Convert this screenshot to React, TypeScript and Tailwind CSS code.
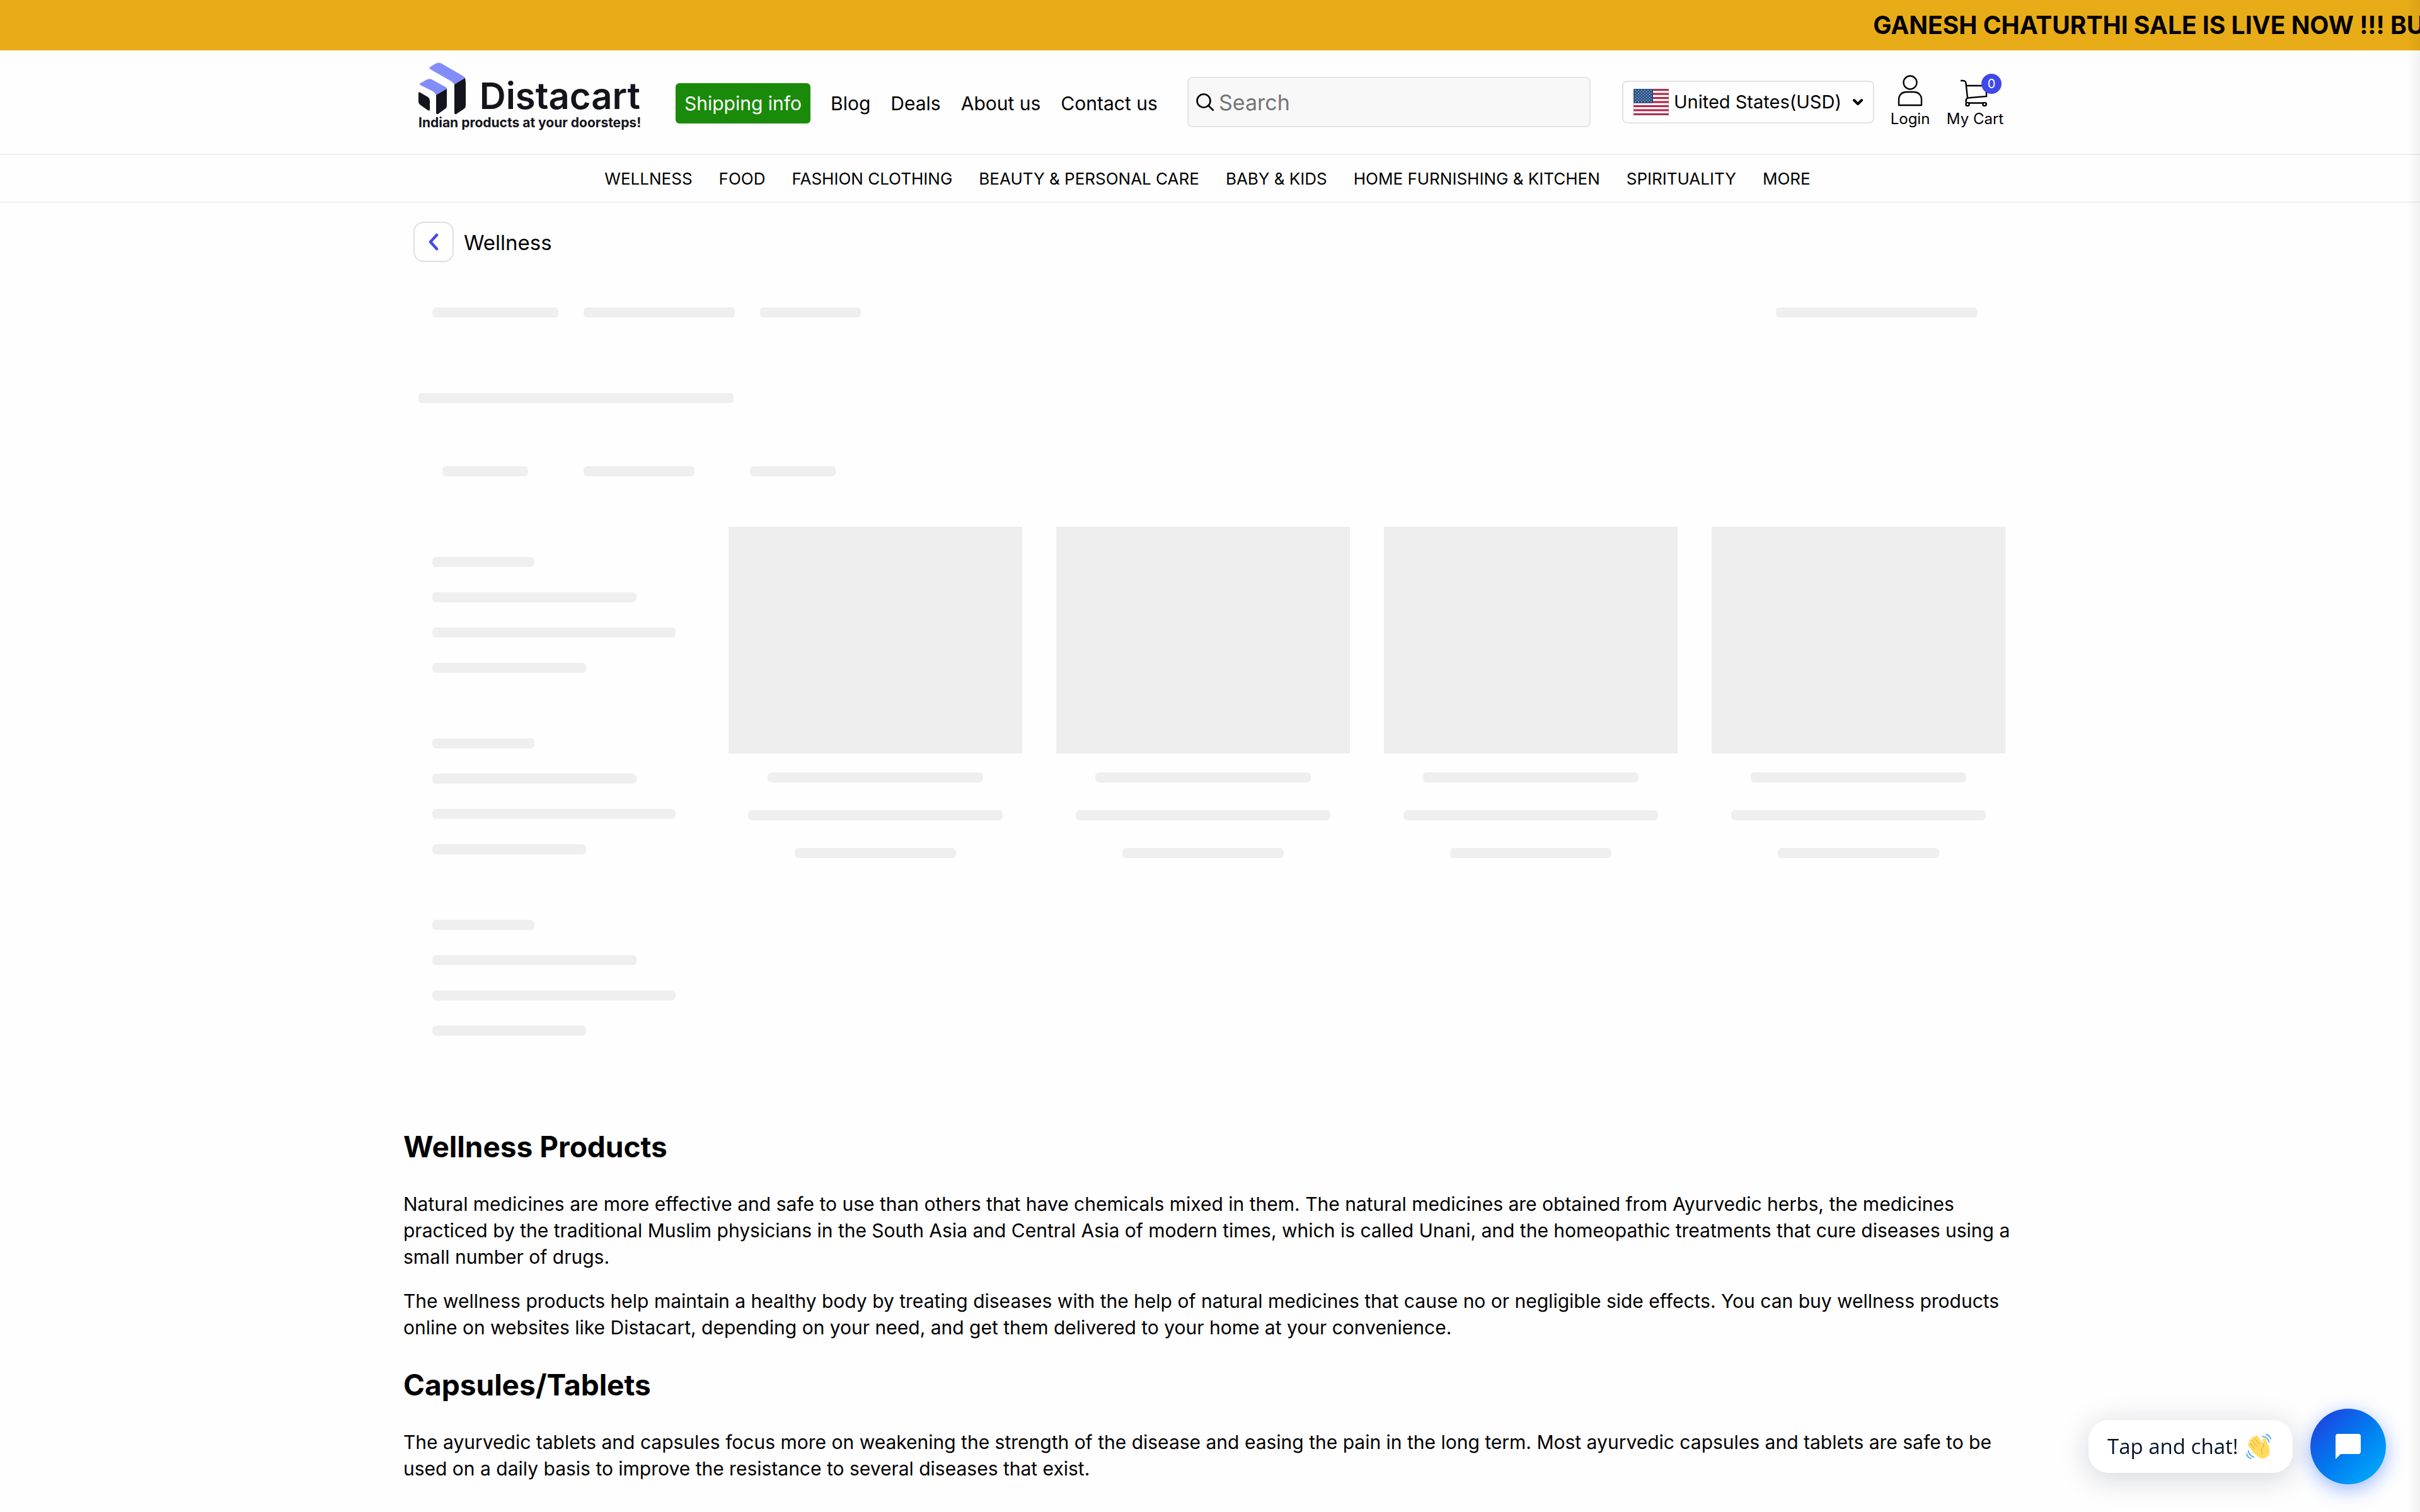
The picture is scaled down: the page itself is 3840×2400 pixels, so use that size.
import type { ReactNode } from "react";

const bar = "h-4 rounded-md bg-[#efefef]";

const navItems = [
  "WELLNESS",
  "FOOD",
  "FASHION CLOTHING",
  "BEAUTY & PERSONAL CARE",
  "BABY & KIDS",
  "HOME FURNISHING & KITCHEN",
  "SPIRITUALITY",
  "MORE",
];

function LogoMark() {
  return (
    <svg viewBox="0 0 76 84" className="h-[84px] w-[76px]" aria-hidden="true">
      <g fill="#14141c">
        <path d="M0 49Q0 46 3 48L15 55Q18 57 18 60V75Q18 78 15 76L5 69Q0 66 0 62Z" />
        <path d="M28 51L45 41V69Q45 72 42 74L31 82Q28 83 28 80Z" />
        <path d="M57 35L73 23Q75 27 75 32V69Q75 72 72 74L60 82Q57 83 57 80Z" />
      </g>
      <g fill="#838dfa">
        <path d="M27 2Q32 -1 37 2L68 20Q72 22 74 25L57 35Q55 32 52 30L19 11Q16 9 19 7Z" />
        <path d="M12 28Q17 25 21 27L41 38Q45 40 45 42L28 52Q26 48 23 46L3 36Q1 35 3 33Z" />
      </g>
    </svg>
  );
}

function Flag() {
  return (
    <svg viewBox="0 0 56 42" className="h-[42px] w-14 shrink-0" aria-hidden="true">
      <rect width="56" height="42" fill="#fff" />
      {[0, 2, 4, 6, 8, 10, 12].map((i) => (
        <rect key={i} y={(i * 42) / 13} width="56" height={42 / 13} fill="#b5294a" />
      ))}
      <rect width="31" height="22.6" fill="#1f4a80" />
      {[0, 1, 2, 3, 4, 5, 6, 7, 8].map((r) =>
        [0, 1, 2, 3, 4, 5].map((c) =>
          r % 2 === 1 && c === 5 ? null : (
            <circle key={`${r}-${c}`} cx={3 + c * 5 + (r % 2) * 2.5} cy={2.3 + r * 2.25} r="0.9" fill="#c9d6ea" />
          ),
        ),
      )}
      <rect x="0.5" y="0.5" width="55" height="41" fill="none" stroke="#6b6b8a" strokeOpacity="0.4" />
    </svg>
  );
}

function Wave() {
  return (
    <svg viewBox="0 0 40 40" className="size-10 shrink-0" role="img" aria-label="waving hand">
      <g stroke="#FFDC5D" strokeWidth="5" strokeLinecap="round" fill="none">
        <path d="M5.500 17L14 29M7.500 11L20 28M11.500 7L24 25M16.500 5L28 22" />
        <path d="M29 9.500Q31 16 33.500 20" />
      </g>
      <path d="M11 26L27 15L34 17Q42 32 31 38Q20 43 11 26Z" fill="#FFDC5D" />
      <g stroke="#EF9645" strokeWidth="1" strokeLinecap="round" fill="none">
        <path d="M6.500 14.500L13 23.500M9 9L17 20M14 6.500L21 16.500M26 32Q22 24 28 20Q29 18 26.500 14" />
      </g>
      <g stroke="#5DADEC" strokeWidth="2" strokeLinecap="round" fill="none">
        <path d="M26.500 4Q34 5 36.500 13M32 1Q38 2.500 39 8M3.500 27Q5 34 12 37M1 32Q2.500 38 7.500 39" />
      </g>
    </svg>
  );
}

function SkeletonGroup() {
  return (
    <div className="flex flex-col gap-10">
      <div className={`${bar} w-[162px]`} />
      <div className={`${bar} w-[324px]`} />
      <div className={`${bar} w-[386px]`} />
      <div className={`${bar} w-[244px]`} />
    </div>
  );
}

function SkeletonCard() {
  return (
    <div className="flex flex-col items-center">
      <div className="h-[360px] w-full bg-[#eeeeee]" />
      <div className="mt-[30px] flex w-full flex-col items-center gap-11">
        <div className={`${bar} w-[342px]`} />
        <div className={`${bar} w-[404px]`} />
        <div className={`${bar} w-64`} />
      </div>
    </div>
  );
}

function Heading({ children }: { children: ReactNode }) {
  return <h2 className="text-[46px] leading-[68px] font-bold">{children}</h2>;
}

function Paragraph({ children }: { children: ReactNode }) {
  return <p className="text-[30px] leading-[42px]">{children}</p>;
}

export default function App() {
  return (
    <div className="relative h-screen overflow-hidden bg-[#fefefe] font-['Inter',sans-serif] text-black">
      <div className="flex h-20 items-center overflow-hidden bg-[#e8ac18] pl-[77.4%] text-[39px] font-bold whitespace-nowrap">
        GANESH CHATURTHI SALE IS LIVE NOW !!! BUY
      </div>

      <header>
        <div className="border-b-2 border-[#efefef]">
          <div className="mx-auto flex h-[164px] max-w-[2560px] items-center pr-5 pl-6">
            <a href="#" className="flex w-[352px] flex-col pb-[18px]" aria-label="Distacart">
              <span className="flex items-end justify-between">
                <LogoMark />
                <span className="text-[58px] leading-[62px] font-semibold text-[#14141c]">Distacart</span>
              </span>
              <span className="text-[21px] leading-6 font-bold whitespace-nowrap text-[#14141c]">
                Indian products at your doorsteps!
              </span>
            </a>
            <nav className="mt-1 ml-14 flex items-center gap-8 text-[30px] whitespace-nowrap" aria-label="Site">
              <a href="#" className="flex h-16 items-center rounded-md bg-[#1a8a0a] px-[14px] text-white">
                Shipping info
              </a>
              <a href="#">Blog</a>
              <a href="#">Deals</a>
              <a href="#">About us</a>
              <a href="#">Contact us</a>
            </nav>
            <label className="ml-auto flex h-20 w-[640px] items-center gap-2 rounded-lg border-2 border-[#e5e5e5] bg-[#f8f8f8] px-3">
              <svg viewBox="0 0 28 28" className="size-7" fill="none" stroke="#000" strokeWidth="2.6" aria-hidden="true">
                <circle cx="12" cy="12" r="10.5" />
                <path d="M19.500 19.500L27 27" strokeLinecap="round" />
              </svg>
              <input
                type="text"
                aria-label="Search"
                placeholder="Search"
                className="min-w-0 flex-1 bg-transparent text-[34px] outline-none placeholder:text-[#757575]"
              />
            </label>
            <div className="ml-[50px] flex h-[68px] w-[400px] items-center gap-2 rounded-lg border-2 border-[#e3e3e3] px-4">
              <Flag />
              <select aria-label="Country" className="min-w-0 flex-1 appearance-none bg-transparent text-[29px] outline-none">
                <option>United States(USD)</option>
              </select>
              <svg viewBox="0 0 16 12" className="h-3 w-4 shrink-0" fill="none" stroke="#000" strokeWidth="4" strokeLinecap="round" strokeLinejoin="round" aria-hidden="true">
                <path d="M2 3l6 6 6-6" />
              </svg>
            </div>
            <a href="#" className="ml-[26px] flex w-[62px] flex-col items-center gap-1 text-2xl">
              <svg viewBox="0 0 40 50" className="h-[50px] w-10" fill="none" stroke="#000" strokeWidth="2.4" aria-hidden="true">
                <circle cx="20" cy="12" r="10.5" />
                <path d="M2 48V39C2 31 8 27 14 27H26C32 27 38 31 38 39V48Z" strokeLinejoin="round" />
              </svg>
              Login
            </a>
            <a href="#" className="relative ml-[26px] flex w-[92px] flex-col items-center gap-1 text-2xl whitespace-nowrap">
              <svg viewBox="0 0 48 50" className="h-[50px] w-12" fill="none" stroke="#000" strokeWidth="2.4" aria-hidden="true">
                <path d="M1 9h3c4 0 5 1 5.500 4L12 36.500 42 34V15M10 17H42M12 36.500c-4 3-3 8 1 8h26c2 0 3 1 3 2" />
                <circle cx="12" cy="46.5" r="2.6" fill="#fefefe" />
                <circle cx="39" cy="46.5" r="2.6" fill="#fefefe" />
              </svg>
              My Cart
              <span className="absolute -top-[2px] right-1 flex size-8 items-center justify-center rounded-full bg-[#3e49e8] text-xl text-white">
                0
              </span>
            </a>
          </div>
        </div>
        <nav className="flex h-[76px] items-center justify-center gap-[42px] border-b-2 border-[#efefef] pr-2 text-[26px] whitespace-nowrap" aria-label="Categories">
          {navItems.map((item) => (
            <a key={item} href="#">
              {item}
            </a>
          ))}
        </nav>
      </header>

      <main className="mx-auto max-w-[2560px]">
        <div className="flex items-center gap-4 px-4 pt-[30px]">
          <button type="button" aria-label="Back" className="flex size-16 items-center justify-center rounded-2xl border-2 border-[#dfdfdf] bg-white">
            <svg viewBox="0 0 16 28" className="h-7 w-4" fill="none" stroke="#4747e0" strokeWidth="4.5" strokeLinecap="round" strokeLinejoin="round" aria-hidden="true">
              <path d="M13 3L3 14l10 11" />
            </svg>
          </button>
          <h1 className="pt-1 text-[33px]">Wellness</h1>
        </div>

        <div className="mt-[72px] flex gap-10 pr-[62px] pl-[46px]">
          <div className={`${bar} w-[200px]`} />
          <div className={`${bar} w-60`} />
          <div className={`${bar} w-40`} />
          <div className={`${bar} ml-auto w-80`} />
        </div>
        <div className="mt-[120px] pl-6">
          <div className={`${bar} w-[500px]`} />
        </div>
        <div className="mt-[100px] flex gap-[88px] pl-[62px]">
          <div className={`${bar} w-[136px]`} />
          <div className={`${bar} w-[176px]`} />
          <div className={`${bar} w-[136px]`} />
        </div>
        <div className="mt-20 flex pr-[18px] pl-[46px]">
          <div className="flex w-[470px] flex-col gap-[104px] pt-12">
            <SkeletonGroup />
            <SkeletonGroup />
            <SkeletonGroup />
          </div>
          <div className="grid flex-1 grid-cols-4 gap-[54px]">
            <SkeletonCard />
            <SkeletonCard />
            <SkeletonCard />
            <SkeletonCard />
          </div>
        </div>

        <section className="mt-[142px] flex flex-col gap-9">
          <Heading>Wellness Products</Heading>
          <div className="flex flex-col gap-7">
            <Paragraph>
              Natural medicines are more effective and safe to use than others that have chemicals mixed in them. The natural medicines are obtained from Ayurvedic herbs, the medicines
              <br />
              practiced by the traditional Muslim physicians in the South Asia and Central Asia of modern times, which is called Unani, and the homeopathic treatments that cure diseases using a
              <br />
              small number of drugs.
            </Paragraph>
            <Paragraph>
              The wellness products help maintain a healthy body by treating diseases with the help of natural medicines that cause no or negligible side effects. You can buy wellness products
              <br />
              online on websites like Distacart, depending on your need, and get them delivered to your home at your convenience.
            </Paragraph>
          </div>
          <Heading>Capsules/Tablets</Heading>
          <Paragraph>
            The ayurvedic tablets and capsules focus more on weakening the strength of the disease and easing the pain in the long term. Most ayurvedic capsules and tablets are safe to be
            <br />
            used on a daily basis to improve the resistance to several diseases that exist.
          </Paragraph>
        </section>
      </main>

      <div className="pointer-events-none fixed inset-y-0 right-0 w-5 bg-linear-to-r from-transparent to-black/5" />

      <div className="fixed right-[54px] bottom-11 flex items-center gap-7">
        <button type="button" className="flex h-[84px] w-[324px] items-center justify-between rounded-[32px] bg-white pr-[34px] pl-[30px] font-['Open_Sans',sans-serif] text-[33px] whitespace-nowrap text-[#06132b] shadow-[0_8px_48px_rgba(0,20,51,0.18)]">
          Tap and chat!
          <Wave />
        </button>
        <button type="button" aria-label="Open chat" className="flex size-[120px] items-center justify-center rounded-full bg-linear-to-br from-[#2032dc] to-[#00b4ff] shadow-[0_8px_32px_rgba(0,77,255,0.4)]">
          <svg viewBox="0 0 40 40" className="size-10" fill="#fff" aria-hidden="true">
            <path d="M4 0h32a4 4 0 0 1 4 4v24a4 4 0 0 1-4 4H8l-8 8V4a4 4 0 0 1 4-4z" />
          </svg>
        </button>
      </div>
    </div>
  );
}
